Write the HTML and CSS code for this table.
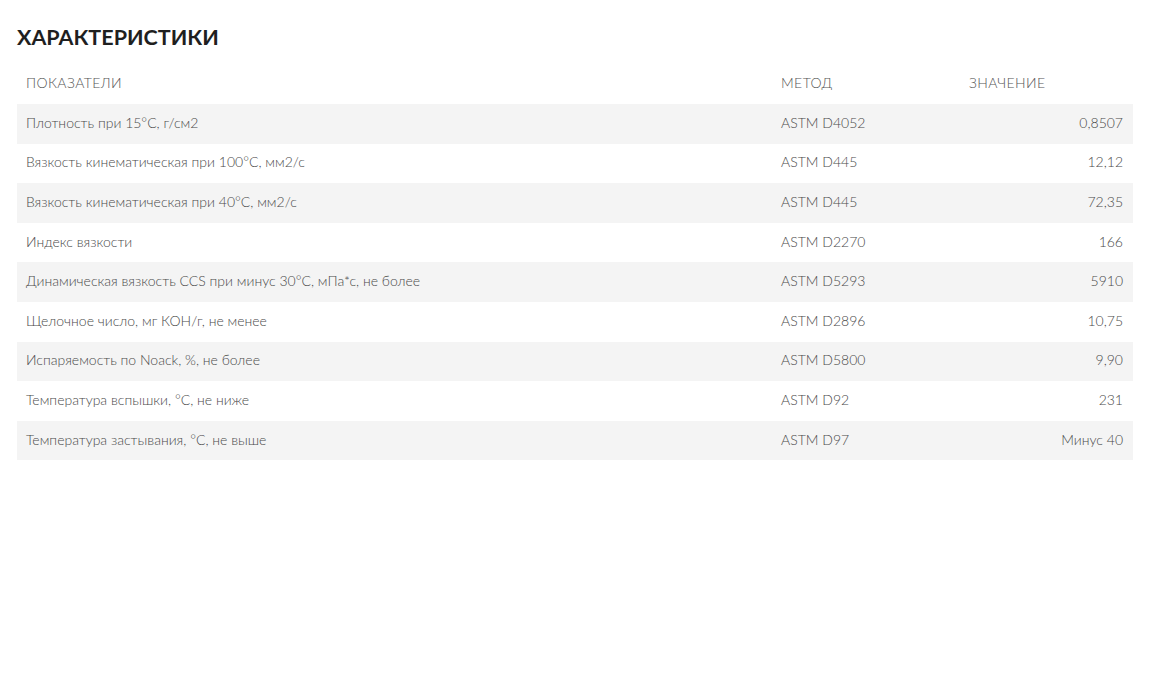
FILE: index.html
```html
<!DOCTYPE html>
<html lang="ru">
<head>
<meta charset="utf-8">
<title>Характеристики</title>
<link rel="stylesheet" href="styles.css">
</head>
<body>
<section class="specs">
  <h2 class="specs-title">ХАРАКТЕРИСТИКИ</h2>
  <table class="specs-table">
    <thead>
      <tr>
        <th class="col-name">ПОКАЗАТЕЛИ</th>
        <th class="col-method">МЕТОД</th>
        <th class="col-value">ЗНАЧЕНИЕ</th>
      </tr>
    </thead>
    <tbody>
      <tr><td>Плотность при 15°С, г/см2</td><td>ASTM D4052</td><td class="num">0,8507</td></tr>
      <tr><td>Вязкость кинематическая при 100°С, мм2/с</td><td>ASTM D445</td><td class="num">12,12</td></tr>
      <tr><td>Вязкость кинематическая при 40°С, мм2/с</td><td>ASTM D445</td><td class="num">72,35</td></tr>
      <tr><td>Индекс вязкости</td><td>ASTM D2270</td><td class="num">166</td></tr>
      <tr><td>Динамическая вязкость CCS при минус 30°С, мПа*с, не более</td><td>ASTM D5293</td><td class="num">5910</td></tr>
      <tr><td>Щелочное число, мг КОН/г, не менее</td><td>ASTM D2896</td><td class="num">10,75</td></tr>
      <tr><td>Испаряемость по Noack, %, не более</td><td>ASTM D5800</td><td class="num">9,90</td></tr>
      <tr><td>Температура вспышки, °С, не ниже</td><td>ASTM D92</td><td class="num">231</td></tr>
      <tr><td>Температура застывания, °С, не выше</td><td>ASTM D97</td><td class="num">Минус 40</td></tr>
    </tbody>
  </table>
</section>
</body>
</html>
```

FILE: styles.css
```css
html, body {
  margin: 0;
  padding: 0;
  background: #ffffff;
}

body {
  font-family: Lato, "Open Sans", Arial, sans-serif;
  color: #555555;
}

.specs {
  padding: 22px 36px 0 17px;
}

.specs-title {
  margin: 0 0 12px 0;
  font-size: 21.5px;
  line-height: 30px;
  font-weight: 700;
  color: #1f1f1f;
  letter-spacing: 0;
}

.specs-table {
  width: 1116px;
  border-collapse: collapse;
  font-size: 14px;
  font-weight: 300;
}

.specs-table thead tr {
  height: 40px;
}

.specs-table tbody tr {
  height: 39.6px;
}

.specs-table th {
  text-align: left;
  font-weight: 300;
  color: #555555;
  padding: 0 9px 4px;
  letter-spacing: 0.4px;
}

.specs-table td {
  padding: 0 9px 3px;
  color: #4a4a4a;
}

.col-name {
  width: 737px;
}

.col-method {
  width: 170px;
}

.specs-table tbody tr:nth-child(odd) {
  background: #f4f4f4;
}

.specs-table td.num {
  text-align: right;
  padding-right: 10px;
}
```
